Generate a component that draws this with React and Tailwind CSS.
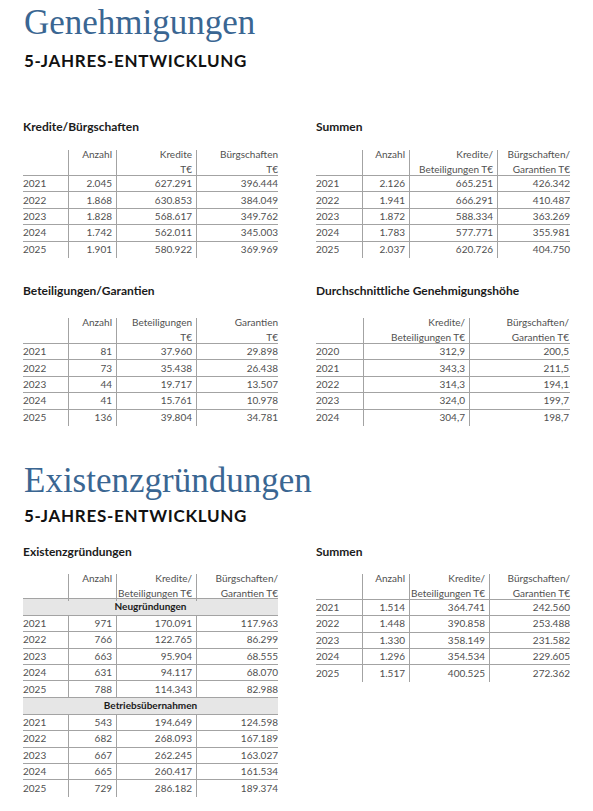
const SERIF = "font-['Liberation_Serif',serif]";
const SANS = "font-['Lato',sans-serif]";

function Table({ title, cols, headers, rows, titleGap, headerH = "h-[26px]" }) {
  const n = headers.length;
  return (
    <div>
      <div className={`text-[12px] leading-none font-bold text-[#1b1b1b] ${titleGap}`}>{title}</div>
      <div className="text-[10px] text-[#505050]">
        <div className={`grid ${cols} ${headerH} border-b border-[#a3a3a3]`}>
          {headers.map((h, i) => (
            <div
              key={i}
              className={`${i > 0 ? "border-l border-[#a3a3a3]" : ""} ${i === n - 1 ? "pr-0" : "pr-[4px]"} text-right`}
            >
              <div className="-mt-[3px] leading-[15px]">
                {h.map((l, j) => (
                  <div key={j}>{l}</div>
                ))}
              </div>
            </div>
          ))}
        </div>
        {rows.map((r, ri) => {
          const last = ri === rows.length - 1;
          if (r.band) {
            return (
              <div
                key={ri}
                className="h-[17px] bg-[#e6e6e6] border-b border-[#a3a3a3] flex items-center justify-center font-bold text-[#1b1b1b] text-[10px]"
              >
                {r.band}
              </div>
            );
          }
          return (
            <div key={ri} className={`grid ${cols} h-[16.4px] ${last ? "" : "border-b border-[#a3a3a3]"}`}>
              {r.map((c, i) => (
                <div
                  key={i}
                  className={`flex items-center ${i === 0 ? "justify-start" : "justify-end border-l border-[#a3a3a3]"} ${
                    i === 0 || i === n - 1 ? "pr-0" : "pr-[4px]"
                  }`}
                >
                  {c}
                </div>
              ))}
            </div>
          );
        })}
      </div>
    </div>
  );
}

const KB = ["Kredite/", "Beteiligungen T€"];
const BG = ["Bürgschaften/", "Garantien T€"];

export default function App() {
  return (
    <div className={`w-[593px] h-[811px] bg-white overflow-hidden ${SANS}`}>
      <div className="pl-[23px] pt-[5px]">
        <h1 className={`${SERIF} text-[35px] leading-none text-[#3a6692] pl-[1px]`}>Genehmigungen</h1>
        <h2 className="mt-[12px] text-[17px] leading-none font-bold tracking-[0.7px] text-[#111] pl-[1px]">
          5-JAHRES-ENTWICKLUNG
        </h2>
        <div className="mt-[52px] grid grid-cols-[255px_254px] gap-x-[38px]">
          <Table
            title="Kredite/Bürgschaften"
            titleGap="mb-[17px]"
            cols="grid-cols-[45px_48px_80px_82px]"
            headers={[[""], ["Anzahl"], ["Kredite", "T€"], ["Bürgschaften", "T€"]]}
            rows={[
              ["2021", "2.045", "627.291", "396.444"],
              ["2022", "1.868", "630.853", "384.049"],
              ["2023", "1.828", "568.617", "349.762"],
              ["2024", "1.742", "562.011", "345.003"],
              ["2025", "1.901", "580.922", "369.969"],
            ]}
          />
          <Table
            title="Summen"
            titleGap="mb-[17px]"
            cols="grid-cols-[46px_47px_88px_73px]"
            headers={[[""], ["Anzahl"], KB, BG]}
            rows={[
              ["2021", "2.126", "665.251", "426.342"],
              ["2022", "1.941", "666.291", "410.487"],
              ["2023", "1.872", "588.334", "363.269"],
              ["2024", "1.783", "577.771", "355.981"],
              ["2025", "2.037", "620.726", "404.750"],
            ]}
          />
          <div className="mt-[27px]">
            <Table
              title="Beteiligungen/Garantien"
              titleGap="mb-[21px]"
              cols="grid-cols-[45px_48px_80px_82px]"
              headers={[[""], ["Anzahl"], ["Beteiligungen", "T€"], ["Garantien", "T€"]]}
              rows={[
                ["2021", "81", "37.960", "29.898"],
                ["2022", "73", "35.438", "26.438"],
                ["2023", "44", "19.717", "13.507"],
                ["2024", "41", "15.761", "10.978"],
                ["2025", "136", "39.804", "34.781"],
              ]}
            />
          </div>
          <div className="mt-[27px]">
            <Table
              title="Durchschnittliche Genehmigungshöhe"
              titleGap="mb-[21px]"
              cols="grid-cols-[47px_106px_100px]"
              headers={[[""], KB, BG]}
              rows={[
                ["2020", "312,9", "200,5"],
                ["2021", "343,3", "211,5"],
                ["2022", "314,3", "194,1"],
                ["2023", "324,0", "199,7"],
                ["2024", "304,7", "198,7"],
              ]}
            />
          </div>
        </div>

        <h1 className={`${SERIF} mt-[37px] text-[35px] leading-none text-[#3a6692] pl-[1px]`}>Existenzgründungen</h1>
        <h2 className="mt-[9px] text-[17px] leading-none font-bold tracking-[0.7px] text-[#111] pl-[1px]">
          5-JAHRES-ENTWICKLUNG
        </h2>
        <div className="mt-[22px] grid grid-cols-[255px_254px] gap-x-[38px] items-start">
          <Table
            title="Existenzgründungen"
            titleGap="mb-[16px]"
            headerH="h-[25px]"
            cols="grid-cols-[45px_48px_80px_82px]"
            headers={[[""], ["Anzahl"], KB, BG]}
            rows={[
              { band: "Neugründungen" },
              ["2021", "971", "170.091", "117.963"],
              ["2022", "766", "122.765", "86.299"],
              ["2023", "663", "95.904", "68.555"],
              ["2024", "631", "94.117", "68.070"],
              ["2025", "788", "114.343", "82.988"],
              { band: "Betriebsübernahmen" },
              ["2021", "543", "194.649", "124.598"],
              ["2022", "682", "268.093", "167.189"],
              ["2023", "667", "262.245", "163.027"],
              ["2024", "665", "260.417", "161.534"],
              ["2025", "729", "286.182", "189.374"],
            ]}
          />
          <Table
            title="Summen"
            titleGap="mb-[16px]"
            cols="grid-cols-[46px_47px_80px_81px]"
            headers={[[""], ["Anzahl"], KB, BG]}
            rows={[
              ["2021", "1.514", "364.741", "242.560"],
              ["2022", "1.448", "390.858", "253.488"],
              ["2023", "1.330", "358.149", "231.582"],
              ["2024", "1.296", "354.534", "229.605"],
              ["2025", "1.517", "400.525", "272.362"],
            ]}
          />
        </div>
      </div>
    </div>
  );
}
